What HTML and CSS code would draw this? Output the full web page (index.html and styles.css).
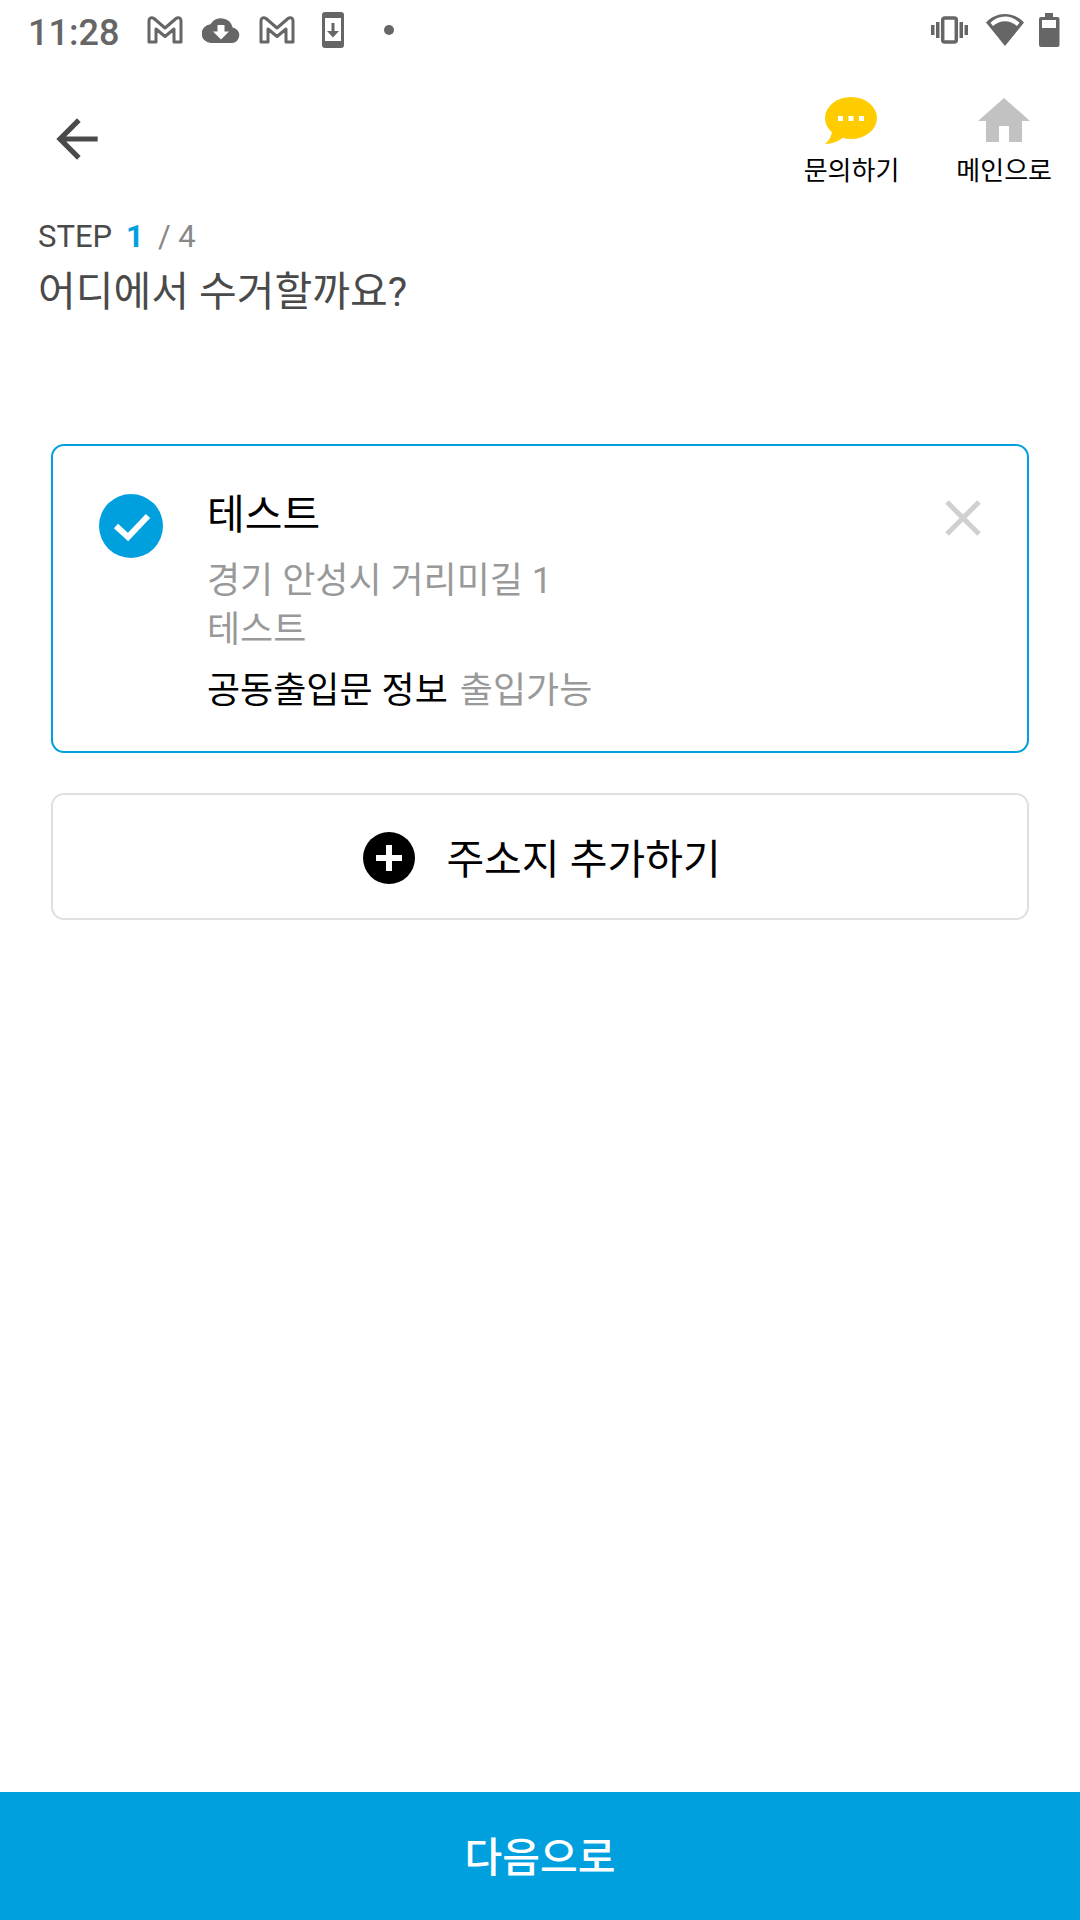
FILE: index.html
```html
<!DOCTYPE html>
<html lang="ko">
<head>
<meta charset="utf-8">
<meta name="viewport" content="width=device-width, initial-scale=1">
<title>수거 신청</title>
<link rel="stylesheet" href="styles.css">
</head>
<body>
<div class="screen">
  <div class="status">
    <span class="clock">11:28</span>
    <div class="notices">
      <svg width="36" height="28" viewBox="0 0 36 28" fill="none" stroke="#666" stroke-width="3" stroke-linejoin="round"><path d="M2 5C2 1.500 5 1 7 2.500L18 12 29 2.500C31 1 34 1.500 34 5V26H27V13L18 20.500 9 13V26H2Z"/></svg>
      <svg width="38" height="28" viewBox="0 0 38 28"><path fill="#666" d="M30.600 11.500A12 12 0 0 0 8.500 8.300 9.300 9.300 0 0 0 9.500 27H30A7.800 7.800 0 0 0 30.600 11.500Z"/><path fill="#fff" d="M15.500 9H22.500V15.500H27L19 23.500 11 15.500H15.500Z"/></svg>
      <svg width="36" height="28" viewBox="0 0 36 28" fill="none" stroke="#666" stroke-width="3" stroke-linejoin="round"><path d="M2 5C2 1.500 5 1 7 2.500L18 12 29 2.500C31 1 34 1.500 34 5V26H27V13L18 20.500 9 13V26H2Z"/></svg>
      <svg class="update" width="22" height="36" viewBox="0 0 22 36"><rect width="22" height="36" rx="3" fill="#666"/><path fill="#fff" d="M3 6H19V29H3Z"/><path fill="#666" d="M9.500 11H12.500V19H17L11 25.500 5 19H9.500Z"/></svg>
      <span class="more"></span>
    </div>
    <div class="system">
      <svg width="37" height="28" viewBox="0 0 37 28" fill="#666"><path d="M0 9H3.500V19H0ZM5 6H8.500V22H5ZM28.500 6H32V22H28.500ZM33.500 9H37V19H33.500Z"/><rect x="11.700" y="2" width="13.600" height="24" rx="2" fill="none" stroke="#666" stroke-width="3.500"/></svg>
      <svg class="wifi" width="38" height="34" viewBox="0 0 38 34"><path fill="#666" d="M0 9.500C10-2 28-2 38 9.500L19 33Z"/><path fill="#fff" d="M4.500 9.800C12.500 1.500 25.500 1.500 33.500 9.800L31 13C24 6.500 14 6.500 7 13Z"/></svg>
      <svg width="22" height="34" viewBox="0 0 22 34"><path fill="#666" d="M7 0H15V4H19.500Q21.500 4 21.500 6V32Q21.500 34 19.500 34H3Q1 34 1 32V6Q1 4 3 4H7Z"/><path fill="#fff" d="M4 7H18V15H4Z"/></svg>
    </div>
  </div>

  <header class="bar">
    <button class="icon-button back" type="button" aria-label="뒤로">
      <svg width="62" height="62" viewBox="0 0 24 24" fill="#4a4a4a"><path d="M20 11H7.830l5.590-5.590L12 4l-8 8 8 8 1.410-1.410L7.830 13H20v-2z"/></svg>
    </button>
    <nav class="links">
      <a class="link" href="#contact">
        <svg width="52" height="48" viewBox="0 0 52 48"><ellipse cx="26" cy="21" rx="26" ry="21" fill="#fc0"/><path fill="#fc0" d="M7 33Q7 41 0 47 11 47 20 39Z"/><path fill="#fff" d="M13 19H18V24H13ZM23.500 19H28.500V24H23.500ZM34 19H39V24H34Z"/></svg>
        <span>문의하기</span>
      </a>
      <a class="link" href="#main">
        <svg width="52" height="48" viewBox="0 0 52 48"><path fill="#c2c2c2" d="M26 1 52 24H44V45H31V29H21V45H8V24H0Z"/></svg>
        <span>메인으로</span>
      </a>
    </nav>
  </header>

  <main class="content">
    <div class="heading">
      <p class="step"><span>STEP</span><b>1</b><span class="total">/ 4</span></p>
      <h1 class="title">어디에서 수거할까요?</h1>
    </div>

    <section class="card">
      <span class="choice">
        <input class="radio" type="radio" name="address" id="address-1" checked>
        <svg class="tick" width="64" height="64" viewBox="0 0 64 64" fill="none" stroke="#fff" stroke-width="6"><path d="M17 32 29 43 49 22"/></svg>
      </span>
      <label class="details" for="address-1">
        <span class="name">테스트</span>
        <span class="address">경기 안성시 거리미길 1<br>테스트</span>
        <span class="entrance"><span>공동출입문 정보</span><span class="value">출입가능</span></span>
      </label>
      <button class="icon-button remove" type="button" aria-label="삭제">
        <svg width="36" height="36" viewBox="0 0 36 36" stroke="#d0d0d0" stroke-width="5"><path d="M2 2 34 34M34 2 2 34"/></svg>
      </button>
    </section>

    <button class="add" type="button">
      <svg width="52" height="52" viewBox="0 0 52 52"><circle cx="26" cy="26" r="26"/><path fill="#fff" d="M23 13H29V23H39V29H29V39H23V29H13V23H23Z"/></svg>
      <span class="add-text">주소지 추가하기</span>
    </button>
  </main>

  <button class="next" type="button">다음으로</button>
</div>
</body>
</html>
```

FILE: styles.css
```css
* {
  box-sizing: border-box;
}

body {
  margin: 0;
  background: #fff;
  color: #000;
  font-family: Roboto, "Noto Sans CJK KR", sans-serif;
}

button {
  border: 0;
  padding: 0;
  background: none;
  color: inherit;
  font: inherit;
}

svg {
  display: block;
  flex: none;
}

.screen {
  display: flex;
  flex-direction: column;
  min-height: 100vh;
}

.status {
  display: flex;
  align-items: center;
  height: 60px;
  padding: 0 20px 0 28px;
}

.clock {
  color: #666;
  font-size: 36px;
  font-weight: 500;
  line-height: 54px;
  padding-top: 6px;
}

.notices {
  display: flex;
  align-items: center;
  gap: 19px;
  margin-left: 28px;
}

.update {
  margin-left: 8px;
}

.more {
  width: 10px;
  height: 10px;
  margin-left: 21px;
  border-radius: 50%;
  background: #666;
}

.system {
  display: flex;
  align-items: center;
  gap: 14px;
  margin-left: auto;
}

.wifi {
  margin-left: 4px;
}

.bar {
  display: flex;
  align-items: flex-start;
  justify-content: space-between;
  padding: 37px 28px 0 46px;
}

.back {
  padding-top: 11px;
}

.links {
  display: flex;
  gap: 57px;
}

.link {
  display: flex;
  flex-direction: column;
  align-items: center;
  gap: 6px;
  color: #000;
  font-size: 26px;
  line-height: 40px;
  text-decoration: none;
}

.content {
  flex: 1;
  padding: 26px 51px 40px;
}

.heading {
  margin: 0 -13px 122px;
  color: #4a4a4a;
}

.step {
  display: flex;
  gap: 14px;
  margin: 0;
  font-size: 31px;
  line-height: 40px;
}

.step b {
  color: #00a0df;
}

.total {
  color: #888;
}

.title {
  margin: 5px 0 0;
  font-size: 41px;
  font-weight: 400;
  line-height: 60px;
}

.card {
  display: flex;
  align-items: flex-start;
  padding: 39px 46px 35px;
  border: 2px solid #00a0df;
  border-radius: 13px;
}

.choice {
  display: grid;
  margin: 9px 44px 0 0;
}

.radio {
  grid-area: 1 / 1;
  width: 64px;
  height: 64px;
  margin: 0;
  border-radius: 50%;
  background: #00a0df;
  appearance: none;
}

.tick {
  grid-area: 1 / 1;
  pointer-events: none;
}

.details {
  display: flex;
  flex: 1;
  flex-direction: column;
  gap: 12px;
  font-size: 36px;
  line-height: 49px;
}

.name {
  font-size: 41px;
  line-height: 60px;
}

.address,
.value {
  color: #999;
}

.entrance {
  display: flex;
  gap: 12px;
}

.remove {
  padding-top: 15px;
}

.add {
  display: flex;
  align-items: center;
  justify-content: center;
  gap: 31px;
  width: 100%;
  margin-top: 40px;
  padding: 33px 0 30px 4px;
  border: 2px solid #e0e0e0;
  border-radius: 13px;
  font-size: 41px;
  line-height: 56px;
}

.add-text {
  padding-top: 4px;
}

.next {
  padding: 36px 0 32px;
  background: #00a0df;
  color: #fff;
  font-size: 41px;
  font-weight: 500;
  line-height: 60px;
}
```
